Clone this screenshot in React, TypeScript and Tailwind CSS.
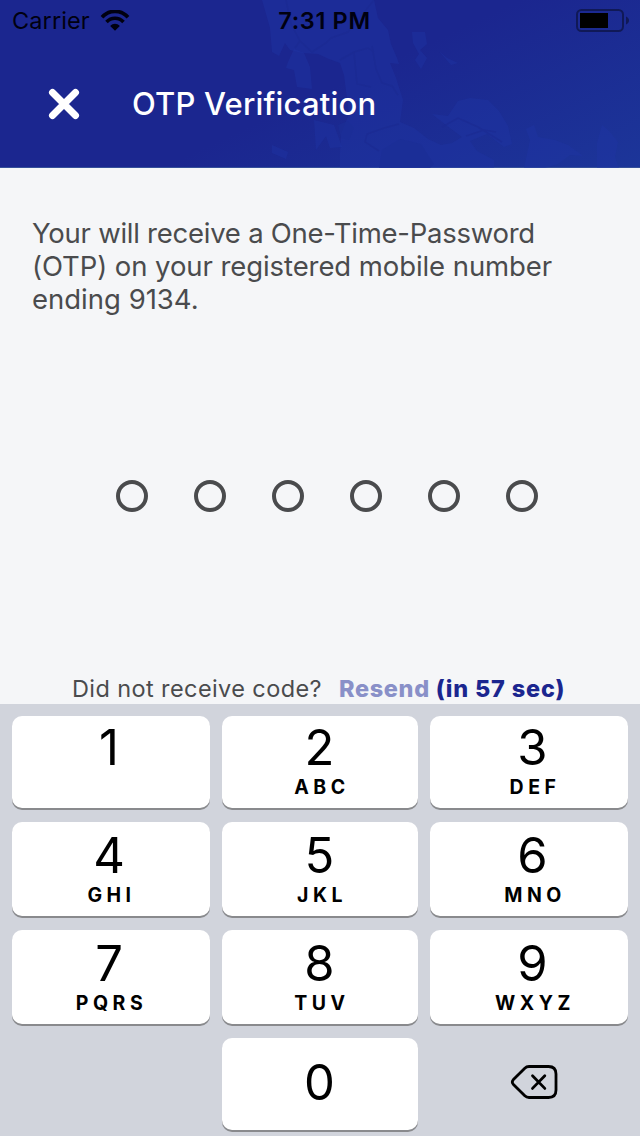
import type { ReactNode } from "react";

type KeyData = { digit: string; letters?: string; shift: string };

const keys: KeyData[] = [
  { digit: "1", shift: "-ml-1" },
  { digit: "2", letters: "ABC", shift: "-ml-px" },
  { digit: "3", letters: "DEF", shift: "ml-[7px]" },
  { digit: "4", letters: "GHI", shift: "-ml-1" },
  { digit: "5", letters: "JKL", shift: "-ml-px" },
  { digit: "6", letters: "MNO", shift: "ml-[7px]" },
  { digit: "7", letters: "PQRS", shift: "-ml-1" },
  { digit: "8", letters: "TUV", shift: "-ml-px" },
  { digit: "9", letters: "WXYZ", shift: "ml-[7px]" },
];

function MapTexture() {
  return (
    <svg className="absolute inset-0 -z-10" width="640" height="168" viewBox="0 0 640 168" aria-hidden="true">
      <g fill="#1f34a4" fillOpacity="0.42">
        <path d="M262 0H374L378 18L388 30L391 44L397 58L399 64L390 63L396 78L403 100L400 122L414 128L428 139L441 145L452 143L462 137L446 125L432 114L448 116L458 101L470 98L488 100L499 111L508 126L512 144L504 147L487 134L470 141L477 151L494 160V168H340V153L341 134L349 114L344 75L340 63L329 59L318 54L302 53L290 50L285 43L279 56L272 52L270 28Z" />
        <path d="M288 62L294 49L304 53L310 67L312 89L297 87L294 70L286 68Z" />
        <path d="M314 120L334 125L342 147L330 148L326 136L316 150Z" />
        <path d="M412 32L425 32L427 44L420 50L427 58L421 69L415 60L419 54L413 43Z" />
        <path d="M272 145L288 152L286 159L272 153Z" />
        <path d="M524 168L530 140L526 129L534 125L538 137L555 140L568 145L583 156L570 155L558 164L545 168Z" />
        <path d="M597 168V143L602 125L609 131L618 142L615 157L619 168Z" />
        <path d="M439 51L447 58L458 63L451 65Z" />
      </g>
      <g fill="none" stroke="#1b2a91" strokeOpacity="0.6" strokeWidth="1.5">
        <path d="M286 0L291 24L300 41L295 48M300 41L312 52L326 43L331 38L348 32L374 0M340 60L354 52L368 48L374 52M354 52L357 84L371 87M372 46L376 69L382 83L392 86L398 95M399 124L384 128L367 134L365 142L379 151M442 127L458 118L478 127L502 142M466 136L484 130L496 132" />
      </g>
      <path d="M338 125L348 121L354 128L349 140L341 138ZM382 150L400 139L421 144L434 164L430 168H379Z" fill="#1b2d95" fillOpacity="0.7" />
    </svg>
  );
}

function WifiIcon() {
  return (
    <svg width="30" height="22" viewBox="0 0 30 22" aria-label="Wi-Fi">
      <path d="M2 7.2C9.2-.6 20.8-.6 28 7.2" fill="none" stroke="#000010" strokeWidth="3.7" />
      <path d="M6.5 12C11.2 7 18.8 7 23.5 12" fill="none" stroke="#000010" strokeWidth="3.6" />
      <path d="M10.2 15.9C13 13.1 17 13.1 19.8 15.9L15 20.8Z" fill="#000010" />
    </svg>
  );
}

function BatteryIcon() {
  return (
    <svg width="54" height="24" viewBox="0 0 54 24" aria-label="Battery">
      <rect x="1" y="1" width="46" height="21" rx="4.5" fill="none" stroke="#101957" strokeWidth="2" />
      <rect x="4" y="4" width="28" height="15" fill="#000" />
      <path d="M50 7.5C54 9 54 14 50 15.5Z" fill="#101957" />
    </svg>
  );
}

function BackspaceIcon() {
  return (
    <svg width="48" height="36" viewBox="0 0 48 36" fill="none" stroke="#000" strokeWidth="2.8" strokeLinecap="round" strokeLinejoin="round">
      <path d="M19 2.5H38.5Q46 2.5 46 10V26Q46 33.5 38.5 33.5H19Q16.5 33.5 14.8 31.8L3.2 20.2Q1.4 18 3.2 15.8L14.8 4.2Q16.5 2.5 19 2.5Z" />
      <path d="M22.5 11.7L34.8 24.4M34.8 11.7L22.5 24.4" />
    </svg>
  );
}

function Key({ children, className = "" }: { children: ReactNode; className?: string }) {
  return (
    <button className={`flex flex-col items-center rounded-[10px] bg-white text-black shadow-[0_2px_0_#898a8d] ${className}`}>
      {children}
    </button>
  );
}

export default function App() {
  return (
    <div className="flex h-[1136px] w-[640px] flex-col overflow-hidden bg-[#f5f6f8] font-['Inter',sans-serif]">
      <header className="relative isolate h-[168px] shrink-0 border-b border-[#35509a] bg-[linear-gradient(155deg,#1b268f_0%,#1b268f_52%,#1c3599_100%)]">
        <MapTexture />
        <div className="grid h-[42px] grid-cols-[1fr_auto_1fr] items-center pl-3 pr-[10px] text-[23.5px] leading-10 text-[#000010]">
          <div className="flex items-center gap-[10px]">
            <span className="tracking-[0.1px]">Carrier</span>
            <WifiIcon />
          </div>
          <span className="pl-[7px] font-semibold tracking-[0.65px]">7:31 PM</span>
          <div className="flex justify-end">
            <BatteryIcon />
          </div>
        </div>
        <div className="flex h-[124px] items-center pl-12">
          <button aria-label="Close">
            <svg width="32" height="32" viewBox="0 0 32 32" fill="none" stroke="#fff" strokeWidth="7" strokeLinecap="round">
              <path d="M4.5 4.5L27.5 27.5M27.5 4.5L4.5 27.5" />
            </svg>
          </button>
          <h1 className="ml-[52px] text-[31px] font-medium leading-10 tracking-[0.2px] text-white">OTP Verification</h1>
        </div>
      </header>

      <main className="flex h-[536px] shrink-0 flex-col text-[#4a4b4d]">
        <p className="ml-8 mt-[49px] whitespace-nowrap text-[27.5px] leading-[33px]">
          <span className="tracking-[-0.25px]">Your will receive a One-Time-Password</span>
          <br />
          <span className="tracking-[-0.08px]">(OTP) on your registered mobile number</span>
          <br />
          <span>ending 9134.</span>
        </p>
        <div className="ml-[116px] mt-[164px] flex gap-[46px]">
          {Array.from({ length: 6 }, (_, i) => (
            <span key={i} className="size-8 rounded-full border-4 border-[#4a4b4d]" />
          ))}
        </div>
        <div className="ml-[72px] mt-auto flex whitespace-nowrap text-[23.5px] leading-[30px]">
          <span className="tracking-[0.4px]">Did not receive code?</span>
          <button className="ml-[17px] font-extrabold tracking-[0.65px] text-[#8990c8]">Resend</button>
          <span className="ml-[6px] font-extrabold tracking-[0.85px] text-[#1b268f]">(in 57 sec)</span>
        </div>
      </main>

      <section className="grid flex-1 grid-cols-[198px_196px_198px] grid-rows-[92px_94px_94px_92px] gap-x-3 gap-y-3.5 bg-[#d1d4dc] px-3 pt-3">
        {keys.map(({ digit, letters, shift }, i) => (
          <Key key={digit} className={i < 3 ? "pt-[2px]" : "pt-1"}>
            <span className={`text-[49px] leading-[60px] ${shift}`}>{digit}</span>
            {letters && (
              <span className={`pl-[5px] text-[19.5px] font-bold leading-[18px] tracking-[4.5px] ${shift}`}>{letters}</span>
            )}
          </Key>
        ))}
        <Key className="col-start-2 pt-[15px]">
          <span className="-ml-px text-[49px] leading-[60px]">0</span>
        </Key>
        <button className="flex items-center justify-center pb-1 pl-[9px]" aria-label="Delete">
          <BackspaceIcon />
        </button>
      </section>
    </div>
  );
}
